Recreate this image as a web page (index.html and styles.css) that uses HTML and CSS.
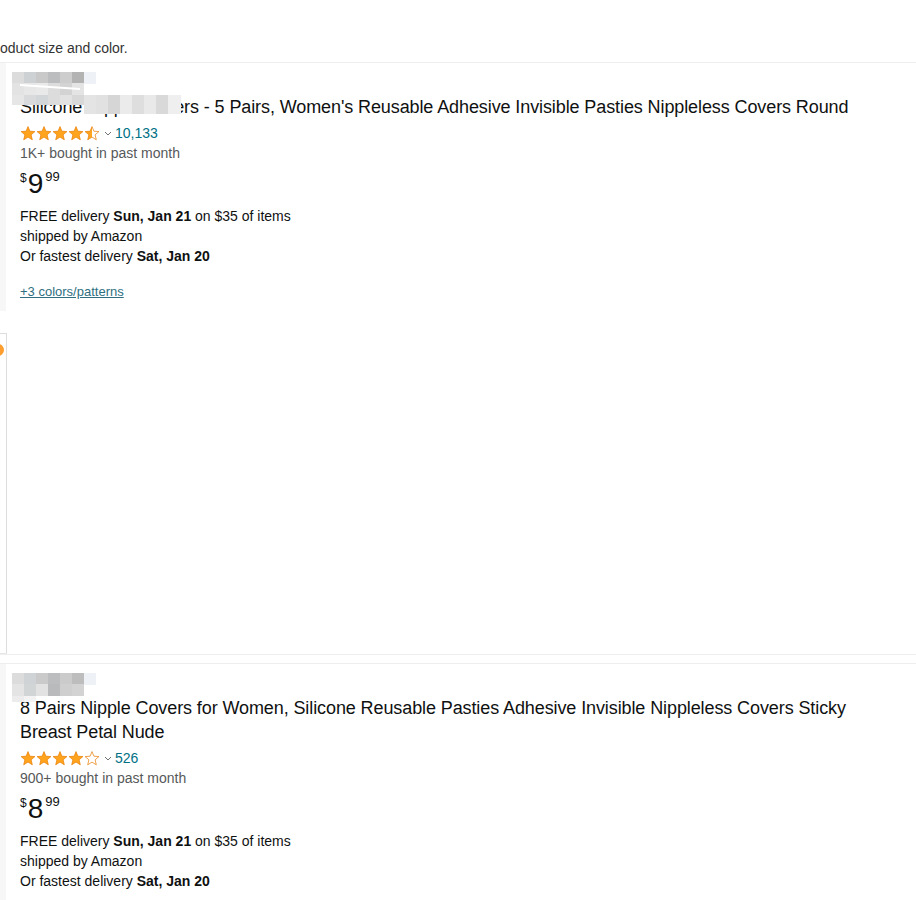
FILE: index.html
```html
<!DOCTYPE html>
<html lang="en">
<head>
    <meta charset="UTF-8">
    <meta name="viewport" content="width=device-width, initial-scale=1.0">
    <title>Results</title>
    <link rel="stylesheet" href="styles.css">
</head>
<body>
    <svg class="defs" width="0" height="0" aria-hidden="true">
        <defs>
            <linearGradient id="halfFill" x1="0" x2="1" y1="0" y2="0">
                <stop offset="50%" stop-color="#ffa41c"/>
                <stop offset="50%" stop-color="#fff"/>
            </linearGradient>
            <symbol id="star" viewBox="0 0 15 15">
                <path d="M7.5 0.6 L9.4 5.2 L14.4 5.6 L10.6 8.8 L11.8 13.8 L7.5 11.1 L3.2 13.8 L4.4 8.8 L0.6 5.6 L5.6 5.2 Z"/>
            </symbol>
        </defs>
    </svg>

    <div class="note">oduct size and color.</div>

    <div class="result">
        <div class="thumb"></div>
        <div class="info">
            <div class="mosaic">
                <span style="left:0;top:0;background:#dcdcdc"></span>
                <span style="left:12px;top:0;background:#cdd1d3"></span>
                <span style="left:24px;top:0;background:#c9c9c9"></span>
                <span style="left:36px;top:0;background:#bcbdbf"></span>
                <span style="left:48px;top:0;background:#cdcdcd"></span>
                <span style="left:60px;top:0;background:#b4b3b4"></span>
                <span style="left:72px;top:0;background:#eef1f5"></span>
                <span style="left:0;top:11px;background:#e3e3e3"></span>
                <span style="left:12px;top:11px;background:#e7e7e7"></span>
                <span style="left:24px;top:11px;background:#e9e9e9"></span>
                <span style="left:36px;top:11px;background:#dcdcdc"></span>
                <span style="left:48px;top:11px;background:#d3d3d3"></span>
                <span style="left:60px;top:11px;background:#e4e4e4"></span>
                <span class="mid" style="left:0;top:23px;background:#e6e6e6"></span>
                <span class="mid" style="left:12px;top:23px;background:#d9dadb"></span>
                <span class="mid" style="left:24px;top:23px;background:#d3d6d9"></span>
                <span class="mid" style="left:36px;top:23px;background:#dcdcdc"></span>
                <span class="mid" style="left:48px;top:23px;background:#e2e2e2"></span>
                <span class="mid" style="left:60px;top:23px;background:#d8d8d8"></span>
                <span class="tall" style="left:72px;top:23px;background:#e4e4e4"></span>
                <span class="tall" style="left:84px;top:23px;background:#e1e1e1"></span>
                <span class="tall" style="left:96px;top:23px;background:#d6d6d6"></span>
                <span class="tall" style="left:108px;top:23px;background:#ebebeb"></span>
                <span class="tall" style="left:120px;top:23px;background:#dedede"></span>
                <span class="tall" style="left:132px;top:23px;background:#e9e9e9"></span>
                <span class="tall" style="left:144px;top:23px;background:#d9d9d9"></span>
                <span class="tall" style="left:156px;top:23px;background:#efefef"></span>
                <i class="streak"></i>
            </div>
            <h2 class="title">Silicone Nipple Covers - 5 Pairs, Women's Reusable Adhesive Invisible Pasties Nippleless Covers Round</h2>
            <div class="rating">
                <span class="stars">
                    <svg class="star"><use href="#star"/></svg>
                    <svg class="star"><use href="#star"/></svg>
                    <svg class="star"><use href="#star"/></svg>
                    <svg class="star"><use href="#star"/></svg>
                    <svg class="star half"><use href="#star"/></svg>
                </span>
                <svg class="chev" width="8" height="5" viewBox="0 0 8 5"><polyline points="1,1 4,4 7,1"/></svg>
                <a class="count" href="#">10,133</a>
            </div>
            <div class="bought">1K+ bought in past month</div>
            <div class="price"><span class="sym">$</span><span class="whole">9</span><span class="frac">99</span></div>
            <div class="delivery">FREE delivery <b>Sun, Jan 21</b> on $35 of items</div>
            <div class="delivery">shipped by Amazon</div>
            <div class="delivery">Or fastest delivery <b>Sat, Jan 20</b></div>
            <a class="variants" href="#">+3 colors/patterns</a>
        </div>
    </div>

    <div class="video-card">
        <div class="video-box">
            <span class="badge"></span>
        </div>
    </div>

    <div class="result">
        <div class="thumb"></div>
        <div class="info">
            <div class="mosaic">
                <span style="left:0;top:0;background:#dcdcdc"></span>
                <span style="left:12px;top:0;background:#cfd3d5"></span>
                <span style="left:24px;top:0;background:#cacaca"></span>
                <span style="left:36px;top:0;background:#bcbdbf"></span>
                <span style="left:48px;top:0;background:#cbcbcb"></span>
                <span style="left:60px;top:0;background:#bebdbe"></span>
                <span style="left:72px;top:0;background:#eef1f5"></span>
                <span style="left:0;top:11px;background:#e4e4e4"></span>
                <span style="left:12px;top:11px;background:#d2d5d6"></span>
                <span style="left:24px;top:11px;background:#e2e2e2"></span>
                <span style="left:36px;top:11px;background:#b9babc"></span>
                <span style="left:48px;top:11px;background:#d0cfcf"></span>
                <span style="left:60px;top:11px;background:#d3d3d3"></span>
                <span class="short" style="left:0;top:23px;background:#ececec"></span>
                <span class="short" style="left:12px;top:23px;background:#f3f3f3"></span>
            </div>
            <h2 class="title">8 Pairs Nipple Covers for Women, Silicone Reusable Pasties Adhesive Invisible Nippleless Covers Sticky Breast Petal Nude</h2>
            <div class="rating">
                <span class="stars">
                    <svg class="star"><use href="#star"/></svg>
                    <svg class="star"><use href="#star"/></svg>
                    <svg class="star"><use href="#star"/></svg>
                    <svg class="star"><use href="#star"/></svg>
                    <svg class="star empty"><use href="#star"/></svg>
                </span>
                <svg class="chev" width="8" height="5" viewBox="0 0 8 5"><polyline points="1,1 4,4 7,1"/></svg>
                <a class="count" href="#">526</a>
            </div>
            <div class="bought">900+ bought in past month</div>
            <div class="price"><span class="sym">$</span><span class="whole">8</span><span class="frac">99</span></div>
            <div class="delivery">FREE delivery <b>Sun, Jan 21</b> on $35 of items</div>
            <div class="delivery">shipped by Amazon</div>
            <div class="delivery">Or fastest delivery <b>Sat, Jan 20</b></div>
        </div>
    </div>
</body>
</html>
```
FILE: styles.css
```css
body {
    margin: 0;
    font-family: 'Liberation Sans', Arial, sans-serif;
    font-size: 14px;
    line-height: 20px;
    color: #0f1111;
    background-color: #fff;
    overflow: hidden;
}

.defs {
    position: absolute;
}

.note {
    padding-top: 38px;
    height: 24px;
    font-size: 14px;
    color: #333;
}

.result {
    display: flex;
    border-top: 1px solid #eeeeee;
}

.thumb {
    width: 6px;
    background-color: #f7f7f7;
    flex-shrink: 0;
}

.info {
    position: relative;
    flex: 1;
    padding: 32px 40px 10px 14px;
}

.title {
    margin: 0;
    font-size: 18px;
    font-weight: normal;
    line-height: 24px;
    letter-spacing: -0.1px;
    color: #0f1111;
}

.rating {
    display: flex;
    align-items: center;
    height: 20px;
    margin-top: 4px;
}

.stars {
    display: flex;
}

.star {
    width: 16px;
    height: 15px;
    fill: #ffa41c;
    stroke: #e67a00;
    stroke-width: 0.7;
}

.star.half {
    fill: url(#halfFill);
}

.star.empty {
    fill: #fff;
}

.chev {
    margin: 1px 3px 0 4px;
    fill: none;
    stroke: #6f7373;
    stroke-width: 1;
}

.count {
    color: #007185;
    text-decoration: none;
}

.bought {
    color: #565959;
}

.price {
    display: flex;
    align-items: flex-start;
    height: 28px;
    margin: 7px 0 8px;
}

.sym,
.frac {
    font-size: 12px;
    line-height: 12px;
    padding-top: 2px;
}

.frac {
    font-size: 13px;
    padding-top: 1px;
}

.sym {
    margin-right: 1px;
}

.whole {
    font-size: 28px;
    line-height: 28px;
    margin-right: 2px;
}

.delivery b {
    font-weight: bold;
}

.variants {
    display: inline-block;
    margin-top: 18px;
    font-size: 13px;
    line-height: 16px;
    color: #2f6f7f;
    text-decoration: underline;
}

.mosaic {
    position: absolute;
    left: 6px;
    top: 9px;
    width: 180px;
    height: 44px;
}

.mosaic span {
    position: absolute;
    width: 12px;
    height: 12px;
}

.mosaic span.mid {
    height: 10px;
}

.mosaic span.tall {
    width: 13px;
    height: 19px;
}

.mosaic span.short {
    height: 6px;
}

.streak {
    position: absolute;
    left: 8px;
    top: 14px;
    width: 60px;
    height: 2px;
    background-color: #fff;
    transform: rotate(4deg);
}

.video-card {
    padding-top: 22px;
    margin-bottom: 8px;
    border-bottom: 1px solid #eeeeee;
}

.video-box {
    position: relative;
    width: 6px;
    height: 319px;
    border: 1px solid #dddddd;
    border-left: none;
    border-bottom-color: #e7e7e7;
}

.badge {
    position: absolute;
    left: -8px;
    top: 10px;
    width: 12px;
    height: 12px;
    border-radius: 50%;
    background-color: #ff9d2e;
}
```
